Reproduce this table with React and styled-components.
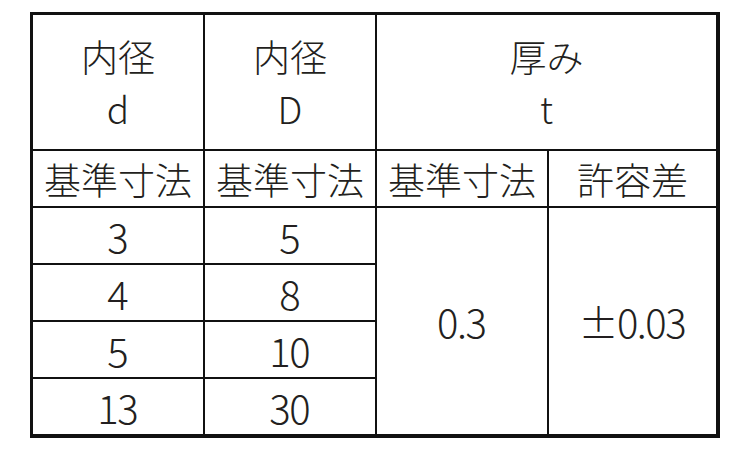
import React from 'react';
import styled, { createGlobalStyle } from 'styled-components';

const Global = createGlobalStyle`
  body {
    margin: 0;
    background: #fff;
    font-family: "Noto Sans CJK JP", "Noto Sans", sans-serif;
    color: #231f20;
  }
`;

const Page = styled.div`
  padding: 12px 30px 0 30px;
`;

const Table = styled.div`
  width: 690px;
  height: 426px;
  box-sizing: border-box;
  border: 3px solid #111;
  border-right-width: 4px;
  border-bottom-width: 4px;
  background: #111;
  display: grid;
  grid-template-columns: 170px 170px 170px 1fr;
  grid-template-rows: 134px repeat(5, 1fr);
  gap: 2px;
`;

const Cell = styled.div`
  background: #fff;
  display: flex;
  flex-direction: column;
  align-items: center;
  justify-content: center;
  font-size: ${p => (p.$num ? '40px' : '37px')};
  letter-spacing: ${p => (p.$num ? '-1.5px' : '0')};
  text-indent: ${p => (p.$num ? '-1.5px' : '0')};
  font-weight: 300;
  line-height: 52px;
  grid-column: ${p => p.$col || 'auto'};
  grid-row: ${p => p.$row || 'auto'};
`;

const rows = [
  ['3', '5'],
  ['4', '8'],
  ['5', '10'],
  ['13', '30'],
];

export default function App() {
  return (
    <Page>
      <Global />
      <Table>
        <Cell>
          <span>内径</span>
          <span>d</span>
        </Cell>
        <Cell>
          <span>内径</span>
          <span>D</span>
        </Cell>
        <Cell $col="3 / 5">
          <span>厚み</span>
          <span>t</span>
        </Cell>
        <Cell>基準寸法</Cell>
        <Cell>基準寸法</Cell>
        <Cell>基準寸法</Cell>
        <Cell>許容差</Cell>
        {rows.map(([d, D], i) => (
          <React.Fragment key={i}>
            <Cell $num $col="1" $row={`${i + 3}`}>{d}</Cell>
            <Cell $num $col="2" $row={`${i + 3}`}>{D}</Cell>
          </React.Fragment>
        ))}
        <Cell $num $col="3" $row="3 / 7">0.3</Cell>
        <Cell $num $col="4" $row="3 / 7">±0.03</Cell>
      </Table>
    </Page>
  );
}
